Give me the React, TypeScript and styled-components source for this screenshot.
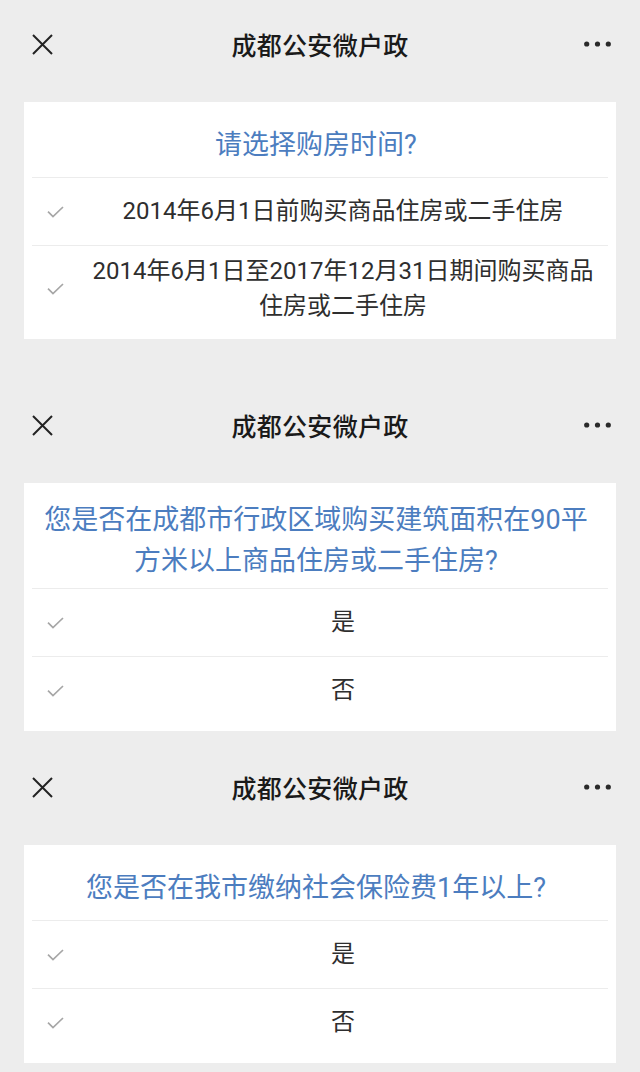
import React from 'react';
import styled, { createGlobalStyle } from 'styled-components';

type Survey = {
    question: string;
    options: string[];
    gap: number;
};

const surveys: Survey[] = [
    {
        question: '请选择购房时间?',
        options: ['2014年6月1日前购买商品住房或二手住房', '2014年6月1日至2017年12月31日期间购买商品住房或二手住房'],
        gap: 0,
    },
    {
        question: '您是否在成都市行政区域购买建筑面积在90平方米以上商品住房或二手住房?',
        options: ['是', '否'],
        gap: 42,
    },
    {
        question: '您是否在我市缴纳社会保险费1年以上?',
        options: ['是', '否'],
        gap: 12,
    },
];

const GlobalStyle = createGlobalStyle`
    body {
        margin: 0;
        background: #ededed;
        font-family: Roboto, "Noto Sans CJK SC", sans-serif;
    }
`;

const CloseIcon = () => (
    <svg width="21" height="21" viewBox="0 0 21 21">
        <path d="M1 1 L20 20 M20 1 L1 20" stroke="#222" strokeWidth="2" fill="none" />
    </svg>
);

const MoreIcon = () => (
    <svg width="27" height="6" viewBox="0 0 27 6">
        <circle cx="2.7" cy="3" r="2.6" fill="#2a2a2a" />
        <circle cx="13.5" cy="3" r="2.6" fill="#2a2a2a" />
        <circle cx="24.3" cy="3" r="2.6" fill="#2a2a2a" />
    </svg>
);

const CheckIcon = () => (
    <svg width="17" height="12" viewBox="0 0 17 12">
        <path d="M1 5.6 L6 10.6 L16 1" stroke="#a6a6a6" strokeWidth="1.7" fill="none" />
    </svg>
);

const App: React.FC = () => {
    return (
        <>
            <GlobalStyle />
            <Page>
                {surveys.map((survey, i) => (
                    <Section key={i} $gap={survey.gap}>
                        <Header>
                            <HeaderButton><CloseIcon /></HeaderButton>
                            <HeaderTitle>成都公安微户政</HeaderTitle>
                            <MoreButton><MoreIcon /></MoreButton>
                        </Header>
                        <Card>
                            <Question>{survey.question}</Question>
                            {survey.options.map(option => (
                                <Option key={option}>
                                    <CheckIcon />
                                    <OptionText>{option}</OptionText>
                                </Option>
                            ))}
                        </Card>
                    </Section>
                ))}
            </Page>
        </>
    );
};

const Page = styled.div`
    width: 640px;
    height: 1072px;
    overflow: hidden;
    display: flex;
    flex-direction: column;
`;

const Section = styled.section<{ $gap: number }>`
    margin-top: ${props => props.$gap}px;
`;

const Header = styled.div`
    height: 88px;
    display: grid;
    grid-template-columns: 1fr auto 1fr;
    align-items: center;
`;

const HeaderButton = styled.div`
    display: flex;
    padding-left: 32px;
`;

const MoreButton = styled.div`
    display: flex;
    justify-self: end;
    padding-right: 29px;
`;

const HeaderTitle = styled.div`
    font-size: 25px;
    font-weight: 500;
    color: #1a1a1a;
    letter-spacing: 0.3px;
`;

const Card = styled.div`
    margin: 14px 24px 0;
    background: #fff;
    padding-bottom: 7px;
`;

const Question = styled.div`
    box-sizing: border-box;
    min-height: 75px;
    padding: 17px 16px 6px 8px;
    display: flex;
    align-items: center;
    justify-content: center;
    text-align: center;
    font-size: 27px;
    line-height: 41px;
    color: #4c7dbf;
`;

const Option = styled.div`
    box-sizing: border-box;
    min-height: 68px;
    margin: 0 8px;
    padding: 8px 7px 8px 15px;
    display: flex;
    align-items: center;
    border-top: 1px solid #ececec;
`;

const OptionText = styled.div`
    flex: 1;
    margin-left: 21px;
    text-align: center;
    font-size: 24px;
    line-height: 35px;
    color: #2e2e2e;
`;

export default App;
